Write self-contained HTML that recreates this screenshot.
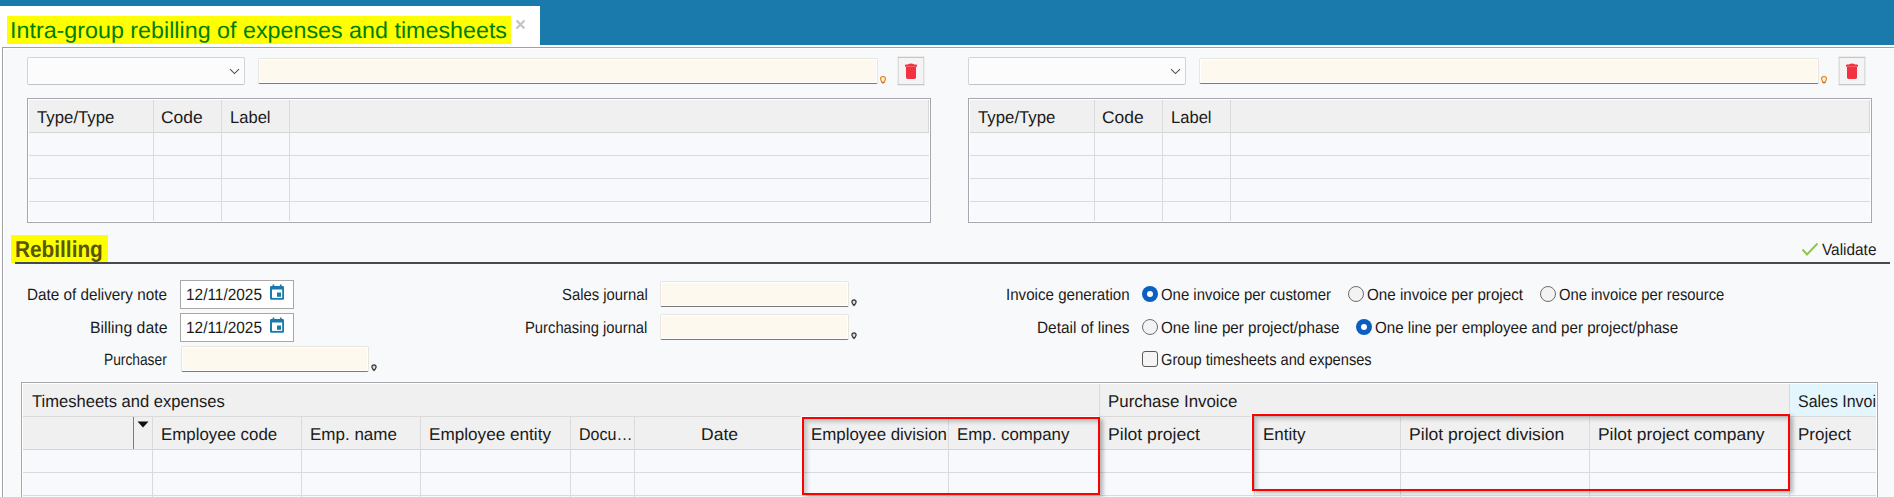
<!DOCTYPE html>
<html><head><meta charset="utf-8">
<style>
*{margin:0;padding:0;box-sizing:border-box}
html,body{width:1894px;height:497px;overflow:hidden;background:#fff;font-family:"Liberation Sans",sans-serif;color:#1a1a1a}
.a{position:absolute}
.t{position:absolute;white-space:nowrap;line-height:1;text-rendering:geometricPrecision;transform-origin:0 0}
.dd{position:absolute;background:#fcfcfc;border:1px solid #d4d4d4;border-bottom-color:#c4c4c4;border-radius:2px}
.inp{position:absolute;background:#fdf9ee;border:1px solid #e9e6df;border-bottom:1px solid #7a7a7a;border-radius:2px;box-shadow:inset 1px 1px 0 #fff,inset -1px -1px 0 #fff}
.grid{position:absolute;background:#f8f9fc;border:1px solid #a6a8ad;box-shadow:inset 0 0 0 1px #fff}
.gh{position:absolute;background:#f0f0f0}
.vl{position:absolute;width:1px;background:#dadada}
.hl{position:absolute;height:1px;background:#dadada}
.trash{position:absolute;width:28px;height:30px;background:#f4f4f4;border:1px solid #ececec;box-shadow:inset 0 1px 0 #c6c6c6,inset 0 -1px 0 #c6c6c6,inset 1px 0 0 #dddddd,inset -1px 0 0 #dddddd}
.date{position:absolute;background:#fff;border:1px solid #a8a8a8}
.radio{position:absolute;width:16px;height:16px;border-radius:50%;border:1px solid #6e6e6e;background:#f3f3f3}
.radio.on{border:none;background:#0b5fc0}
.radio.on::after{content:"";position:absolute;left:5px;top:5px;width:6px;height:6px;border-radius:50%;background:#fff}
.red{position:absolute;border:2px solid #ff0000;box-shadow:-1px -1px 0 #f4ffff,3px 2px 4px rgba(0,0,0,.28),inset 3px 3px 4px rgba(0,0,0,.2)}
</style></head>
<body>
<div class="a" style="left:0;top:0;width:1894px;height:45px;background:#1a7aab"></div>
<div class="a" style="left:0;top:6px;width:540px;height:39px;background:#fff"></div>
<div class="a" style="left:7px;top:16px;width:504px;height:28px;background:#ffff00"></div>
<svg class="a" style="left:515px;top:19px" width="11" height="11" viewBox="0 0 11 11"><path d="M1.5 1.5 L9.5 9.5 M9.5 1.5 L1.5 9.5" stroke="#c3c3c3" stroke-width="2.2"/></svg>
<div class="a" style="left:2px;top:47px;width:1892px;height:450px;background:#f8f9fb;border-left:1px solid #a0a1a4;border-top:1px solid #a0a1a4;box-shadow:inset 1px 1px 0 #fff"></div>

<div class="a" style="left:0px;top:0">
  <div class="dd" style="left:27px;top:57px;width:218px;height:28px"></div>
  <svg class="a" style="left:229px;top:68px" width="11" height="7" viewBox="0 0 11 7"><path d="M1 1.2 L5.5 5.6 L10 1.2" fill="none" stroke="#505050" stroke-width="1.1"/></svg>
  <div class="inp" style="left:258px;top:58px;width:620px;height:26px"></div>
  <svg class="a" style="left:879px;top:75px" width="8" height="10" viewBox="0 0 8 10"><path d="M4 1.5 C2.5 1.5 1.6 2.4 1.6 3.7 C1.6 5 2.5 5.7 2.8 7.4 L5.2 7.4 C5.5 5.7 6.4 5 6.4 3.7 C6.4 2.4 5.5 1.5 4 1.5Z" fill="#fff1d6" stroke="#e57c12" stroke-width="1.1"/><path d="M3 7.5 L5 7.5 L4 9Z" fill="#5a7590"/></svg>
  <div class="trash" style="left:897px;top:56px"></div>
  <svg class="a" style="left:904px;top:62px" width="14" height="18" viewBox="0 0 14 18"><path d="M1 3.2 Q1 2.6 2 2.6 H12 Q13 2.6 13 3.2 V4.7 H1Z M4.3 2 Q7 1.2 9.7 2 V2.8 H4.3Z" fill="#f2323f"/><path d="M2 5.1 H12 V15.2 Q12 17 10.2 17 H3.8 Q2 17 2 15.2Z" fill="#f2323f"/></svg>
  <div class="grid" style="left:27px;top:98px;width:904px;height:125px"></div>
  <div class="gh" style="left:29px;top:100px;width:900px;height:32px"></div>
  <div class="hl" style="left:29px;top:132px;width:900px;background:#d6d6d6"></div>
  <div class="vl" style="left:928px;top:100px;height:32px;background:#d6d6d6"></div>
  <div class="hl" style="left:29px;top:155px;width:900px"></div>
  <div class="hl" style="left:29px;top:178px;width:900px"></div>
  <div class="hl" style="left:29px;top:201px;width:900px"></div>
  <div class="vl" style="left:153px;top:100px;height:121px"></div>
  <div class="vl" style="left:221px;top:100px;height:121px"></div>
  <div class="vl" style="left:289px;top:100px;height:121px"></div>
</div>
<div class="a" style="left:941px;top:0">
  <div class="dd" style="left:27px;top:57px;width:218px;height:28px"></div>
  <svg class="a" style="left:229px;top:68px" width="11" height="7" viewBox="0 0 11 7"><path d="M1 1.2 L5.5 5.6 L10 1.2" fill="none" stroke="#505050" stroke-width="1.1"/></svg>
  <div class="inp" style="left:258px;top:58px;width:620px;height:26px"></div>
  <svg class="a" style="left:879px;top:75px" width="8" height="10" viewBox="0 0 8 10"><path d="M4 1.5 C2.5 1.5 1.6 2.4 1.6 3.7 C1.6 5 2.5 5.7 2.8 7.4 L5.2 7.4 C5.5 5.7 6.4 5 6.4 3.7 C6.4 2.4 5.5 1.5 4 1.5Z" fill="#fff1d6" stroke="#e57c12" stroke-width="1.1"/><path d="M3 7.5 L5 7.5 L4 9Z" fill="#5a7590"/></svg>
  <div class="trash" style="left:897px;top:56px"></div>
  <svg class="a" style="left:904px;top:62px" width="14" height="18" viewBox="0 0 14 18"><path d="M1 3.2 Q1 2.6 2 2.6 H12 Q13 2.6 13 3.2 V4.7 H1Z M4.3 2 Q7 1.2 9.7 2 V2.8 H4.3Z" fill="#f2323f"/><path d="M2 5.1 H12 V15.2 Q12 17 10.2 17 H3.8 Q2 17 2 15.2Z" fill="#f2323f"/></svg>
  <div class="grid" style="left:27px;top:98px;width:904px;height:125px"></div>
  <div class="gh" style="left:29px;top:100px;width:900px;height:32px"></div>
  <div class="hl" style="left:29px;top:132px;width:900px;background:#d6d6d6"></div>
  <div class="vl" style="left:928px;top:100px;height:32px;background:#d6d6d6"></div>
  <div class="hl" style="left:29px;top:155px;width:900px"></div>
  <div class="hl" style="left:29px;top:178px;width:900px"></div>
  <div class="hl" style="left:29px;top:201px;width:900px"></div>
  <div class="vl" style="left:153px;top:100px;height:121px"></div>
  <div class="vl" style="left:221px;top:100px;height:121px"></div>
  <div class="vl" style="left:289px;top:100px;height:121px"></div>
</div>

<!-- REBILLING HEADER -->
<div class="a" style="left:11px;top:235px;width:97px;height:28px;background:#ffff00"></div>
<div class="a" style="left:15px;top:262px;width:1875px;height:2px;background:#46494e"></div>
<svg class="a" style="left:1801px;top:242px" width="18" height="15" viewBox="0 0 18 15"><path d="M1.5 7.5 L6 12.5 L16.5 1.5" fill="none" stroke="#8cc747" stroke-width="1.9"/></svg>

<!-- FORM -->
<div class="date" style="left:180px;top:280px;width:114px;height:29px"></div>
<div class="date" style="left:180px;top:313px;width:114px;height:29px"></div>
<svg class="a" style="left:270px;top:284px" width="14" height="16" viewBox="0 0 14 16"><path d="M1.2 2 H12.8 Q14 2 14 3.2 V14.5 Q14 15.7 12.8 15.7 H1.2 Q0 15.7 0 14.5 V3.2 Q0 2 1.2 2Z" fill="#1a7aab"/><path d="M2 5.5 H12.2 V13.9 H2Z" fill="#fff"/><path d="M7 8.5 H11 V12.8 H7Z" fill="#1a7aab"/><path d="M2.6 0.4 H4.3 V2.5 H2.6Z M9.9 0.4 H11.6 V2.5 H9.9Z" fill="#1a7aab"/></svg>
<svg class="a" style="left:270px;top:317px" width="14" height="16" viewBox="0 0 14 16"><path d="M1.2 2 H12.8 Q14 2 14 3.2 V14.5 Q14 15.7 12.8 15.7 H1.2 Q0 15.7 0 14.5 V3.2 Q0 2 1.2 2Z" fill="#1a7aab"/><path d="M2 5.5 H12.2 V13.9 H2Z" fill="#fff"/><path d="M7 8.5 H11 V12.8 H7Z" fill="#1a7aab"/><path d="M2.6 0.4 H4.3 V2.5 H2.6Z M9.9 0.4 H11.6 V2.5 H9.9Z" fill="#1a7aab"/></svg>
<div class="inp" style="left:181px;top:346px;width:188px;height:26px"></div>
<svg class="a" style="left:371px;top:364px" width="6" height="8" viewBox="0 0 6 8"><path d="M3 0.9 C1.7 0.9 0.9 1.8 0.9 2.9 C0.9 4 1.8 4.6 2.1 5.6 L3.9 5.6 C4.2 4.6 5.1 4 5.1 2.9 C5.1 1.8 4.3 0.9 3 0.9Z" fill="#dcdcdc" stroke="#333" stroke-width="1.2"/><path d="M2.1 6 L3.9 6 L3 7.6Z" fill="#333"/></svg>
<div class="inp" style="left:660px;top:281px;width:189px;height:26px"></div>
<svg class="a" style="left:851px;top:299px" width="6" height="8" viewBox="0 0 6 8"><path d="M3 0.9 C1.7 0.9 0.9 1.8 0.9 2.9 C0.9 4 1.8 4.6 2.1 5.6 L3.9 5.6 C4.2 4.6 5.1 4 5.1 2.9 C5.1 1.8 4.3 0.9 3 0.9Z" fill="#dcdcdc" stroke="#333" stroke-width="1.2"/><path d="M2.1 6 L3.9 6 L3 7.6Z" fill="#333"/></svg>
<div class="inp" style="left:660px;top:314px;width:189px;height:26px"></div>
<svg class="a" style="left:851px;top:332px" width="6" height="8" viewBox="0 0 6 8"><path d="M3 0.9 C1.7 0.9 0.9 1.8 0.9 2.9 C0.9 4 1.8 4.6 2.1 5.6 L3.9 5.6 C4.2 4.6 5.1 4 5.1 2.9 C5.1 1.8 4.3 0.9 3 0.9Z" fill="#dcdcdc" stroke="#333" stroke-width="1.2"/><path d="M2.1 6 L3.9 6 L3 7.6Z" fill="#333"/></svg>

<div class="radio on" style="left:1142px;top:286px"></div>
<div class="radio" style="left:1348px;top:286px"></div>
<div class="radio" style="left:1540px;top:286px"></div>
<div class="radio" style="left:1142px;top:319px"></div>
<div class="radio on" style="left:1356px;top:319px"></div>
<div class="a" style="left:1142px;top:351px;width:16px;height:16px;border:1px solid #5a5a5a;border-radius:3px;background:#f5f5f5"></div>

<!-- BOTTOM GRID -->
<div class="grid" style="left:21px;top:382px;width:1857px;height:130px"></div>
<div class="gh" style="left:23px;top:384px;width:1766px;height:32px"></div>
<div class="a" style="left:1790px;top:384px;width:86px;height:32px;background:#e4f6fd"></div>
<div class="gh" style="left:23px;top:417px;width:1853px;height:32px"></div>
<div class="hl" style="left:23px;top:416px;width:1853px"></div>
<div class="hl" style="left:23px;top:449px;width:1853px;background:#d4d4d4"></div>
<div class="hl" style="left:23px;top:472px;width:1853px"></div>
<div class="hl" style="left:23px;top:495px;width:1853px"></div>
<div class="vl" style="left:1099px;top:384px;height:32px"></div>
<div class="vl" style="left:1789px;top:384px;height:32px"></div>
<div class="vl" style="left:133px;top:417px;height:32px;background:#7c7c7c"></div>
<svg class="a" style="left:137px;top:421px" width="12" height="7" viewBox="0 0 12 7"><path d="M0.5 0.5 H11.5 L6 6.5Z" fill="#111"/></svg>
<div class="vl" style="left:152px;top:417px;height:90px"></div>
<div class="vl" style="left:301px;top:417px;height:90px"></div>
<div class="vl" style="left:420px;top:417px;height:90px"></div>
<div class="vl" style="left:570px;top:417px;height:90px"></div>
<div class="vl" style="left:634px;top:417px;height:90px"></div>
<div class="vl" style="left:948px;top:417px;height:90px"></div>
<div class="vl" style="left:1254px;top:417px;height:90px"></div>
<div class="vl" style="left:1400px;top:417px;height:90px"></div>
<div class="vl" style="left:1589px;top:417px;height:90px"></div>
<div class="vl" style="left:1789px;top:417px;height:90px"></div>

<div class="t" style="left:9.98px;top:19px;font-size:23px;font-weight:400;color:#008000;transform:scaleX(1.0123)">Intra-group rebilling of expenses and timesheets</div>
<div class="t" style="left:15.10px;top:238px;font-size:23px;font-weight:700;color:#575700;transform:scaleX(0.9043)">Rebilling</div>
<div class="t" style="left:1822.00px;top:242px;font-size:16.25px;font-weight:400;color:#1a1a1a;transform:scaleX(0.9464)">Validate</div>
<div class="t" style="left:37.00px;top:109px;font-size:17px;font-weight:400;color:#1a1a1a;transform:scaleX(0.9870)">Type/Type</div>
<div class="t" style="left:160.97px;top:109px;font-size:17px;font-weight:400;color:#1a1a1a;transform:scaleX(1.0263)">Code</div>
<div class="t" style="left:230.03px;top:109px;font-size:17px;font-weight:400;color:#1a1a1a;transform:scaleX(0.9744)">Label</div>
<div class="t" style="left:978.00px;top:109px;font-size:17px;font-weight:400;color:#1a1a1a;transform:scaleX(0.9870)">Type/Type</div>
<div class="t" style="left:1101.97px;top:109px;font-size:17px;font-weight:400;color:#1a1a1a;transform:scaleX(1.0263)">Code</div>
<div class="t" style="left:1171.03px;top:109px;font-size:17px;font-weight:400;color:#1a1a1a;transform:scaleX(0.9744)">Label</div>
<div class="t" style="left:27.06px;top:287px;font-size:16.25px;font-weight:400;color:#1a1a1a;transform:scaleX(0.9388)">Date of delivery note</div>
<div class="t" style="left:90.03px;top:320px;font-size:16.25px;font-weight:400;color:#1a1a1a;transform:scaleX(0.9740)">Billing date</div>
<div class="t" style="left:104.15px;top:352px;font-size:16.25px;font-weight:400;color:#1a1a1a;transform:scaleX(0.8472)">Purchaser</div>
<div class="t" style="left:186.05px;top:287px;font-size:16.25px;font-weight:400;color:#1a1a1a;transform:scaleX(0.9487)">12/11/2025</div>
<div class="t" style="left:186.05px;top:320px;font-size:16.25px;font-weight:400;color:#1a1a1a;transform:scaleX(0.9487)">12/11/2025</div>
<div class="t" style="left:562.09px;top:287px;font-size:16.25px;font-weight:400;color:#1a1a1a;transform:scaleX(0.9121)">Sales journal</div>
<div class="t" style="left:525.09px;top:320px;font-size:16.25px;font-weight:400;color:#1a1a1a;transform:scaleX(0.9091)">Purchasing journal</div>
<div class="t" style="left:1006.07px;top:287px;font-size:16.25px;font-weight:400;color:#1a1a1a;transform:scaleX(0.9308)">Invoice generation</div>
<div class="t" style="left:1037.05px;top:320px;font-size:16.25px;font-weight:400;color:#1a1a1a;transform:scaleX(0.9474)">Detail of lines</div>
<div class="t" style="left:1161.08px;top:287px;font-size:16.25px;font-weight:400;color:#1a1a1a;transform:scaleX(0.9180)">One invoice per customer</div>
<div class="t" style="left:1367.07px;top:287px;font-size:16.25px;font-weight:400;color:#1a1a1a;transform:scaleX(0.9333)">One invoice per project</div>
<div class="t" style="left:1559.09px;top:287px;font-size:16.25px;font-weight:400;color:#1a1a1a;transform:scaleX(0.9106)">One invoice per resource</div>
<div class="t" style="left:1161.06px;top:320px;font-size:16.25px;font-weight:400;color:#1a1a1a;transform:scaleX(0.9362)">One line per project/phase</div>
<div class="t" style="left:1375.07px;top:320px;font-size:16.25px;font-weight:400;color:#1a1a1a;transform:scaleX(0.9319)">One line per employee and per project/phase</div>
<div class="t" style="left:1161.10px;top:352px;font-size:16.25px;font-weight:400;color:#1a1a1a;transform:scaleX(0.9004)">Group timesheets and expenses</div>
<div class="t" style="left:32.00px;top:393px;font-size:17px;font-weight:400;color:#1a1a1a;transform:scaleX(0.9745)">Timesheets and expenses</div>
<div class="t" style="left:1108.01px;top:393px;font-size:17px;font-weight:400;color:#1a1a1a;transform:scaleX(0.9922)">Purchase Invoice</div>
<div class="t" style="left:161.01px;top:426px;font-size:17px;font-weight:400;color:#1a1a1a;transform:scaleX(0.9913)">Employee code</div>
<div class="t" style="left:310.00px;top:426px;font-size:17px;font-weight:400;color:#1a1a1a;transform:scaleX(1.0000)">Emp. name</div>
<div class="t" style="left:428.99px;top:426px;font-size:17px;font-weight:400;color:#1a1a1a;transform:scaleX(1.0084)">Employee entity</div>
<div class="t" style="left:579.06px;top:426px;font-size:17px;font-weight:400;color:#1a1a1a;transform:scaleX(0.9434)">Docu…</div>
<div class="t" style="left:700.97px;top:426px;font-size:17px;font-weight:400;color:#1a1a1a;transform:scaleX(1.0303)">Date</div>
<div class="t" style="left:811.01px;top:426px;font-size:17px;font-weight:400;color:#1a1a1a;transform:scaleX(0.9925)">Employee division</div>
<div class="t" style="left:957.01px;top:426px;font-size:17px;font-weight:400;color:#1a1a1a;transform:scaleX(0.9911)">Emp. company</div>
<div class="t" style="left:1107.97px;top:426px;font-size:17px;font-weight:400;color:#1a1a1a;transform:scaleX(1.0345)">Pilot project</div>
<div class="t" style="left:1263.00px;top:426px;font-size:17px;font-weight:400;color:#1a1a1a;transform:scaleX(1.0000)">Entity</div>
<div class="t" style="left:1408.97px;top:426px;font-size:17px;font-weight:400;color:#1a1a1a;transform:scaleX(1.0340)">Pilot project division</div>
<div class="t" style="left:1597.98px;top:426px;font-size:17px;font-weight:400;color:#1a1a1a;transform:scaleX(1.0248)">Pilot project company</div>
<div class="t" style="left:1798.00px;top:426px;font-size:17px;font-weight:400;color:#1a1a1a;transform:scaleX(1.0000)">Project</div>
<div class="a" style="left:1790px;top:384px;width:86px;height:32px;overflow:hidden"><div class="t" style="left:8.06px;top:9px;font-size:17px;color:#1a1a1a;transform:scaleX(0.9375)">Sales Invoice</div></div>
<div class="red" style="left:802px;top:417px;width:298px;height:78px"></div>
<div class="red" style="left:1252px;top:414px;width:538px;height:77px"></div>
</body></html>
